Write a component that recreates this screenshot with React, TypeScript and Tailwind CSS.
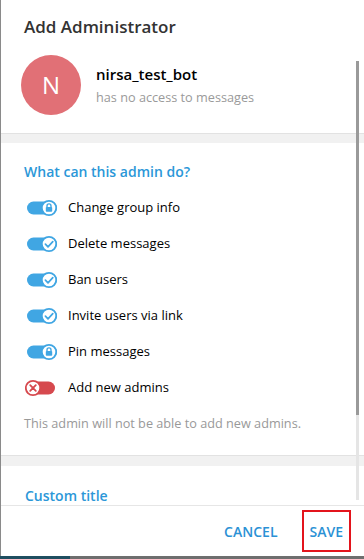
const BLUE = "#40a6e3";

function Toggle({ on, icon }: { on: boolean; icon: "lock" | "check" | "x" }) {
  const color = on ? BLUE : "#d6494e";
  const cx = on ? 24 : 8;
  return (
    <svg width="34" height="18" viewBox="0 0 34 18" className="shrink-0">
      <rect x="2" y="2.5" width={on ? 30 : 28} height="13" rx="6.5" fill={color} />
      <circle cx={cx} cy="9" r="7.2" fill="#fff" stroke={color} strokeWidth="1.8" />
      {icon === "check" && (
        <path d={`M${cx - 3.6} 9.2 L${cx - 1} 11.8 L${cx + 3.8} 6.6`} fill="none" stroke={color} strokeWidth="1.7" strokeLinecap="round" strokeLinejoin="round" />
      )}
      {icon === "lock" && (
        <g>
          <path d={`M${cx - 2} 8.2 V6.9 a2 2 0 0 1 4 0 V8.2`} fill="none" stroke={color} strokeWidth="1.4" />
          <rect x={cx - 3.2} y="8" width="6.4" height="4.8" rx="0.8" fill={color} />
        </g>
      )}
      {icon === "x" && (
        <path d={`M${cx - 2.8} 6.2 L${cx + 2.8} 11.8 M${cx + 2.8} 6.2 L${cx - 2.8} 11.8`} fill="none" stroke={color} strokeWidth="1.8" strokeLinecap="round" />
      )}
    </svg>
  );
}

const rights: { label: string; on: boolean; icon: "lock" | "check" | "x" }[] = [
  { label: "Change group info", on: true, icon: "lock" },
  { label: "Delete messages", on: true, icon: "check" },
  { label: "Ban users", on: true, icon: "check" },
  { label: "Invite users via link", on: true, icon: "check" },
  { label: "Pin messages", on: true, icon: "lock" },
  { label: "Add new admins", on: false, icon: "x" },
];

export default function App() {
  return (
    <div className="w-[364px] h-[559px] flex flex-col bg-[#6e6e6e] overflow-hidden" style={{ fontFamily: '"Open Sans", "Noto Sans", sans-serif' }}>
      <div className="relative h-[556px] flex flex-col bg-white border-l border-[#8a8a8a]">
        <div className="h-[505px] overflow-hidden flex flex-col">
          <div className="pt-[15px] pl-[23px] text-[17px] leading-[24px] font-semibold text-[#333]">Add Administrator</div>
          <div className="flex items-center mt-[16px] pl-[20px]">
            <div className="w-[60px] h-[60px] rounded-full bg-[#e17076] flex items-center justify-center text-white text-[24px]">N</div>
            <div className="ml-[15px] flex flex-col">
              <div className="text-[15px] leading-[20px] font-semibold text-black">nirsa_test_bot</div>
              <div className="mt-[3px] text-[12.7px] leading-[20px] text-[#9a9a9a]">has no access to messages</div>
            </div>
          </div>
          <div className="mt-[18px] h-[10px] shrink-0 bg-[#f1f1f1] border-t border-[#e2e2e2]" />
          <div className="pt-[19px] pl-[23px] text-[14px] leading-[20px] font-semibold text-[#2b97d8]">What can this admin do?</div>
          <div className="mt-[8px] flex flex-col">
            {rights.map((r) => (
              <div key={r.label} className="h-[36px] flex items-center pl-[24px]">
                <Toggle on={r.on} icon={r.icon} />
                <span className="ml-[9px] text-[13px] text-black">{r.label}</span>
              </div>
            ))}
          </div>
          <div className="mt-[7px] pl-[23px] text-[12.7px] leading-[20px] text-[#999]">This admin will not be able to add new admins.</div>
          <div className="mt-[22px] h-[11px] shrink-0 bg-[#f1f1f1] border-t border-[#e2e2e2]" />
          <div className="pt-[20px] pl-[24px] text-[14px] leading-[20px] font-semibold text-[#2b97d8]">Custom title</div>
        </div>
        <div className="flex-1 border-t border-[#e6e6e6] flex items-center justify-end pr-[13px] gap-[16px]">
          <div className="h-[42px] px-[8px] flex items-center text-[14px] font-semibold text-[#2b91d5]">CANCEL</div>
          <div className="h-[42px] px-[6px] flex items-center text-[14px] font-semibold text-[#2b91d5] border-2 border-[#e3141c]">SAVE</div>
        </div>
        <div className="absolute right-[5px] top-[61px] w-[3px] flex flex-col">
          <div className="h-[354px] bg-[#9a9a9a]" />
          <div className="h-[85px] bg-[#e5e5e5]" />
        </div>
      </div>
      <div className="flex-1 flex">
        <div className="w-[70px] bg-[#1f4e60]" />
        <div className="flex-1 bg-[#6e6e6e]" />
      </div>
    </div>
  );
}
